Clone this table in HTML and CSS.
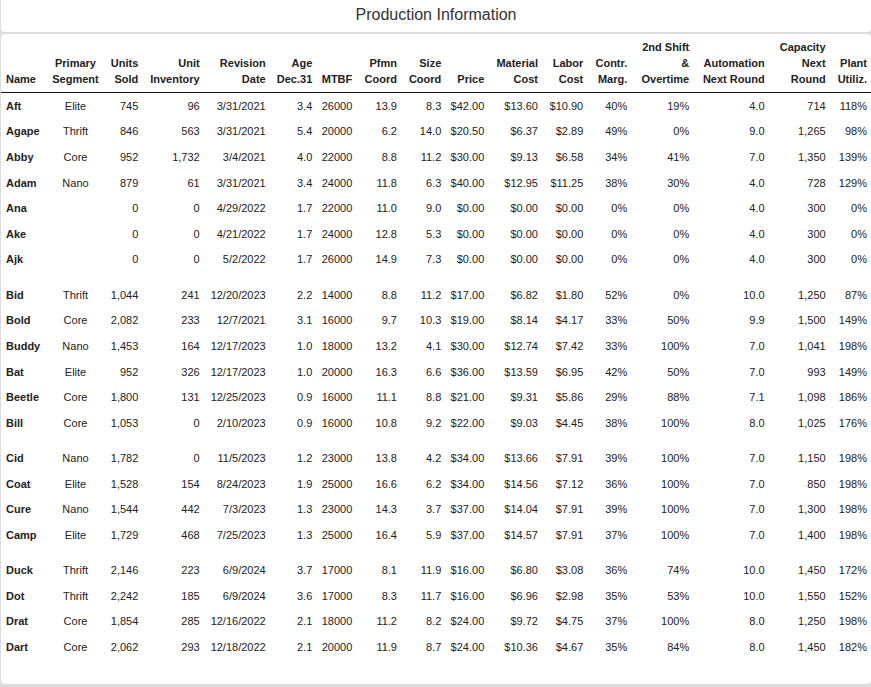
FILE: index.html
```html
<!DOCTYPE html>
<html lang="en">
<head>
<meta charset="utf-8">
<title>Production Information</title>
<link rel="stylesheet" href="styles.css">
</head>
<body>
<div class="page">
  <header class="title-box"><h1 class="title">Production Information</h1></header>
  <section class="card">
    <table class="prod">
      <colgroup>
        <col class="c-name"><col class="c-seg"><col class="c-units"><col class="c-inv"><col class="c-rev"><col class="c-age"><col class="c-mtbf"><col class="c-pfmn"><col class="c-size"><col class="c-price"><col class="c-mat"><col class="c-lab"><col class="c-contr"><col class="c-shift"><col class="c-auto"><col class="c-cap"><col class="c-plant">
      </colgroup>
      <thead>
        <tr>
          <th class="l">Name</th>
          <th class="c">Primary<br>Segment</th>
          <th>Units<br>Sold</th>
          <th>Unit<br>Inventory</th>
          <th>Revision<br>Date</th>
          <th>Age<br>Dec.31</th>
          <th>MTBF</th>
          <th>Pfmn<br>Coord</th>
          <th>Size<br>Coord</th>
          <th>Price</th>
          <th>Material<br>Cost</th>
          <th>Labor<br>Cost</th>
          <th>Contr.<br>Marg.</th>
          <th>2nd Shift<br>&amp;<br>Overtime</th>
          <th>Automation<br>Next Round</th>
          <th>Capacity<br>Next<br>Round</th>
          <th class="last">Plant<br>Utiliz.</th>
        </tr>
      </thead>
      <tbody>
        <tr><td class="l b">Aft</td><td class="c">Elite</td><td>745</td><td>96</td><td>3/31/2021</td><td>3.4</td><td>26000</td><td>13.9</td><td>8.3</td><td>$42.00</td><td>$13.60</td><td>$10.90</td><td>40%</td><td>19%</td><td>4.0</td><td>714</td><td class="last">118%</td></tr>
        <tr><td class="l b">Agape</td><td class="c">Thrift</td><td>846</td><td>563</td><td>3/31/2021</td><td>5.4</td><td>20000</td><td>6.2</td><td>14.0</td><td>$20.50</td><td>$6.37</td><td>$2.89</td><td>49%</td><td>0%</td><td>9.0</td><td>1,265</td><td class="last">98%</td></tr>
        <tr><td class="l b">Abby</td><td class="c">Core</td><td>952</td><td>1,732</td><td>3/4/2021</td><td>4.0</td><td>22000</td><td>8.8</td><td>11.2</td><td>$30.00</td><td>$9.13</td><td>$6.58</td><td>34%</td><td>41%</td><td>7.0</td><td>1,350</td><td class="last">139%</td></tr>
        <tr><td class="l b">Adam</td><td class="c">Nano</td><td>879</td><td>61</td><td>3/31/2021</td><td>3.4</td><td>24000</td><td>11.8</td><td>6.3</td><td>$40.00</td><td>$12.95</td><td>$11.25</td><td>38%</td><td>30%</td><td>4.0</td><td>728</td><td class="last">129%</td></tr>
        <tr><td class="l b">Ana</td><td class="c"></td><td>0</td><td>0</td><td>4/29/2022</td><td>1.7</td><td>22000</td><td>11.0</td><td>9.0</td><td>$0.00</td><td>$0.00</td><td>$0.00</td><td>0%</td><td>0%</td><td>4.0</td><td>300</td><td class="last">0%</td></tr>
        <tr><td class="l b">Ake</td><td class="c"></td><td>0</td><td>0</td><td>4/21/2022</td><td>1.7</td><td>24000</td><td>12.8</td><td>5.3</td><td>$0.00</td><td>$0.00</td><td>$0.00</td><td>0%</td><td>0%</td><td>4.0</td><td>300</td><td class="last">0%</td></tr>
        <tr><td class="l b">Ajk</td><td class="c"></td><td>0</td><td>0</td><td>5/2/2022</td><td>1.7</td><td>26000</td><td>14.9</td><td>7.3</td><td>$0.00</td><td>$0.00</td><td>$0.00</td><td>0%</td><td>0%</td><td>4.0</td><td>300</td><td class="last">0%</td></tr>
        <tr class="gap"><td colspan="17"></td></tr>
        <tr><td class="l b">Bid</td><td class="c">Thrift</td><td>1,044</td><td>241</td><td>12/20/2023</td><td>2.2</td><td>14000</td><td>8.8</td><td>11.2</td><td>$17.00</td><td>$6.82</td><td>$1.80</td><td>52%</td><td>0%</td><td>10.0</td><td>1,250</td><td class="last">87%</td></tr>
        <tr><td class="l b">Bold</td><td class="c">Core</td><td>2,082</td><td>233</td><td>12/7/2021</td><td>3.1</td><td>16000</td><td>9.7</td><td>10.3</td><td>$19.00</td><td>$8.14</td><td>$4.17</td><td>33%</td><td>50%</td><td>9.9</td><td>1,500</td><td class="last">149%</td></tr>
        <tr><td class="l b">Buddy</td><td class="c">Nano</td><td>1,453</td><td>164</td><td>12/17/2023</td><td>1.0</td><td>18000</td><td>13.2</td><td>4.1</td><td>$30.00</td><td>$12.74</td><td>$7.42</td><td>33%</td><td>100%</td><td>7.0</td><td>1,041</td><td class="last">198%</td></tr>
        <tr><td class="l b">Bat</td><td class="c">Elite</td><td>952</td><td>326</td><td>12/17/2023</td><td>1.0</td><td>20000</td><td>16.3</td><td>6.6</td><td>$36.00</td><td>$13.59</td><td>$6.95</td><td>42%</td><td>50%</td><td>7.0</td><td>993</td><td class="last">149%</td></tr>
        <tr><td class="l b">Beetle</td><td class="c">Core</td><td>1,800</td><td>131</td><td>12/25/2023</td><td>0.9</td><td>16000</td><td>11.1</td><td>8.8</td><td>$21.00</td><td>$9.31</td><td>$5.86</td><td>29%</td><td>88%</td><td>7.1</td><td>1,098</td><td class="last">186%</td></tr>
        <tr><td class="l b">Bill</td><td class="c">Core</td><td>1,053</td><td>0</td><td>2/10/2023</td><td>0.9</td><td>16000</td><td>10.8</td><td>9.2</td><td>$22.00</td><td>$9.03</td><td>$4.45</td><td>38%</td><td>100%</td><td>8.0</td><td>1,025</td><td class="last">176%</td></tr>
        <tr class="gap"><td colspan="17"></td></tr>
        <tr><td class="l b">Cid</td><td class="c">Nano</td><td>1,782</td><td>0</td><td>11/5/2023</td><td>1.2</td><td>23000</td><td>13.8</td><td>4.2</td><td>$34.00</td><td>$13.66</td><td>$7.91</td><td>39%</td><td>100%</td><td>7.0</td><td>1,150</td><td class="last">198%</td></tr>
        <tr><td class="l b">Coat</td><td class="c">Elite</td><td>1,528</td><td>154</td><td>8/24/2023</td><td>1.9</td><td>25000</td><td>16.6</td><td>6.2</td><td>$34.00</td><td>$14.56</td><td>$7.12</td><td>36%</td><td>100%</td><td>7.0</td><td>850</td><td class="last">198%</td></tr>
        <tr><td class="l b">Cure</td><td class="c">Nano</td><td>1,544</td><td>442</td><td>7/3/2023</td><td>1.3</td><td>23000</td><td>14.3</td><td>3.7</td><td>$37.00</td><td>$14.04</td><td>$7.91</td><td>39%</td><td>100%</td><td>7.0</td><td>1,300</td><td class="last">198%</td></tr>
        <tr><td class="l b">Camp</td><td class="c">Elite</td><td>1,729</td><td>468</td><td>7/25/2023</td><td>1.3</td><td>25000</td><td>16.4</td><td>5.9</td><td>$37.00</td><td>$14.57</td><td>$7.91</td><td>37%</td><td>100%</td><td>7.0</td><td>1,400</td><td class="last">198%</td></tr>
        <tr class="gap"><td colspan="17"></td></tr>
        <tr><td class="l b">Duck</td><td class="c">Thrift</td><td>2,146</td><td>223</td><td>6/9/2024</td><td>3.7</td><td>17000</td><td>8.1</td><td>11.9</td><td>$16.00</td><td>$6.80</td><td>$3.08</td><td>36%</td><td>74%</td><td>10.0</td><td>1,450</td><td class="last">172%</td></tr>
        <tr><td class="l b">Dot</td><td class="c">Thrift</td><td>2,242</td><td>185</td><td>6/9/2024</td><td>3.6</td><td>17000</td><td>8.3</td><td>11.7</td><td>$16.00</td><td>$6.96</td><td>$2.98</td><td>35%</td><td>53%</td><td>10.0</td><td>1,550</td><td class="last">152%</td></tr>
        <tr><td class="l b">Drat</td><td class="c">Core</td><td>1,854</td><td>285</td><td>12/16/2022</td><td>2.1</td><td>18000</td><td>11.2</td><td>8.2</td><td>$24.00</td><td>$9.72</td><td>$4.75</td><td>37%</td><td>100%</td><td>8.0</td><td>1,250</td><td class="last">198%</td></tr>
        <tr><td class="l b">Dart</td><td class="c">Core</td><td>2,062</td><td>293</td><td>12/18/2022</td><td>2.1</td><td>20000</td><td>11.9</td><td>8.7</td><td>$24.00</td><td>$10.36</td><td>$4.67</td><td>35%</td><td>84%</td><td>8.0</td><td>1,450</td><td class="last">182%</td></tr>
      </tbody>
    </table>
  </section>
</div>
</body>
</html>
```

FILE: styles.css
```css
html, body {
  margin: 0;
  padding: 0;
}
body {
  background: #dcdcdc;
  width: 871px;
  height: 687px;
  overflow: hidden;
  font-family: "Liberation Sans", Arial, sans-serif;
  color: #222;
}
.page {
  display: flex;
  flex-direction: column;
  gap: 2px;
  padding-left: 1px;
}
.title-box {
  background: #fff;
  width: 870px;
  height: 32px;
  box-sizing: border-box;
  padding-top: 5.5px;
  border-radius: 0 0 4px 4px;
}
.title {
  margin: 0;
  font-size: 16px;
  line-height: 18px;
  font-weight: normal;
  text-align: center;
  color: #333;
}
.card {
  background: #fff;
  width: 870px;
  height: 650px;
  border-radius: 4px;
}
.prod {
  table-layout: fixed;
  width: 870px;
  border-collapse: collapse;
  font-size: 11px;
}
.c-name { width: 46px; }
.c-seg { width: 57px; }
.c-units { width: 39.3px; }
.c-inv { width: 61.4px; }
.c-rev { width: 66px; }
.c-age { width: 46.6px; }
.c-mtbf { width: 40px; }
.c-pfmn { width: 44.7px; }
.c-size { width: 44.3px; }
.c-price { width: 43px; }
.c-mat { width: 53.7px; }
.c-lab { width: 45.3px; }
.c-contr { width: 44px; }
.c-shift { width: 62px; }
.c-auto { width: 75.4px; }
.c-cap { width: 61px; }
.c-plant { width: 40.3px; }

.prod th {
  font-weight: bold;
  line-height: 16px;
  padding: 5px 5px 5px 0;
  text-align: right;
  vertical-align: bottom;
  white-space: nowrap;
  border-bottom: 1px solid #111;
  color: #222;
}
.prod tbody tr {
  height: 25.65px;
}
.prod td {
  line-height: 15px;
  padding: 5.65px 5px 5px 0;
  text-align: right;
  white-space: nowrap;
  vertical-align: middle;
}
.prod .l {
  text-align: left;
  padding-left: 5px;
}
.prod .c {
  text-align: center;
  padding-right: 0;
}
.prod .b {
  font-weight: bold;
}
.prod .last {
  padding-right: 4px;
}
.prod tbody tr.gap {
  height: 9.5px;
}
.prod tr.gap td {
  height: 9.5px;
  padding: 0;
  line-height: 0;
}
```
